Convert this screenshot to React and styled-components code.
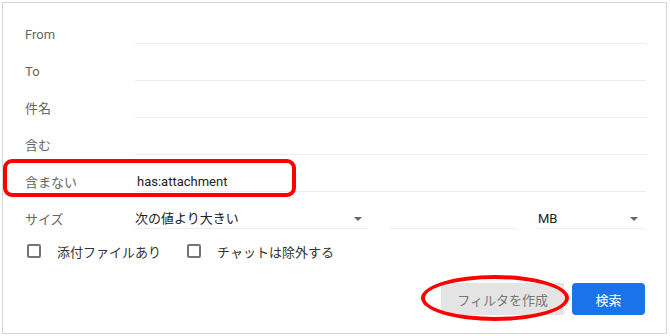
import React from "react";
import styled, { createGlobalStyle } from "styled-components";

const GlobalStyle = createGlobalStyle`
  html, body {
    margin: 0;
    padding: 0;
    background: #fff;
  }
  body {
    font-family: Roboto, "Noto Sans CJK JP", sans-serif;
    -webkit-font-smoothing: antialiased;
  }
`;

const fields = [
  { label: "From", value: "" },
  { label: "To", value: "" },
  { label: "件名", value: "" },
  { label: "含む", value: "" },
  { label: "含まない", value: "has:attachment", marked: true },
];

const App = () => {
  return (
    <>
      <GlobalStyle />
      <Panel>
        <Rows>
          {fields.map((f) => (
            <Row key={f.label}>
              {f.marked && <MarkBox />}
              <Label>{f.label}</Label>
              <Field>{f.value}</Field>
            </Row>
          ))}
          <Row>
            <Label>サイズ</Label>
            <SizeFields>
              <Select width={233}>
                <span>次の値より大きい</span>
                <Caret />
              </Select>
              <Field style={{ width: 126 }} />
              <Select width={106}>
                <span>MB</span>
                <Caret />
              </Select>
            </SizeFields>
          </Row>
        </Rows>

        <CheckRow>
          <Check>
            <Box />
            <span>添付ファイルあり</span>
          </Check>
          <Check>
            <Box />
            <span>チャットは除外する</span>
          </Check>
        </CheckRow>

        <ButtonRow>
          <ButtonWrap>
            <MarkEllipse />
            <Button>フィルタを作成</Button>
          </ButtonWrap>
          <Button primary>検索</Button>
        </ButtonRow>
      </Panel>
    </>
  );
};

export default App;

const Panel = styled.div`
  position: relative;
  box-sizing: border-box;
  margin: 2px 0 0 2px;
  width: 665px;
  height: 332px;
  border: 1px solid #d6d6d6;
  background: #fff;
  padding: 4px 20px 0 22px;
  font-size: 13px;
`;

const Rows = styled.div`
  display: flex;
  flex-direction: column;
`;

const Row = styled.div`
  position: relative;
  height: 37px;
  display: grid;
  grid-template-columns: 110px 1fr;
  align-items: end;
`;

const Label = styled.div`
  color: #666;
  line-height: 18px;
`;

const Field = styled.div`
  box-sizing: border-box;
  height: 19px;
  line-height: 18px;
  padding-left: 2px;
  color: #222;
  border-bottom: 1px solid #ececec;
`;

const SizeFields = styled.div`
  display: flex;
  align-items: end;
  gap: 22px;
`;

const Select = styled.div`
  box-sizing: border-box;
  width: ${(p) => p.width}px;
  height: 19px;
  line-height: 18px;
  display: flex;
  align-items: center;
  justify-content: space-between;
  padding-right: 6px;
  color: #222;
  border-bottom: 1px solid #ececec;
`;

const Caret = styled.span`
  width: 0;
  height: 0;
  border-left: 4px solid transparent;
  border-right: 4px solid transparent;
  border-top: 4px solid #666;
`;

const CheckRow = styled.div`
  height: 44px;
  display: flex;
  align-items: center;
  gap: 26px;
  padding-left: 2px;
`;

const Check = styled.label`
  display: flex;
  align-items: center;
  gap: 16px;
  color: #333;
`;

const Box = styled.span`
  box-sizing: border-box;
  width: 14px;
  height: 14px;
  border: 2px solid #757575;
  border-radius: 2px;
`;

const ButtonRow = styled.div`
  margin-top: 10px;
  display: flex;
  justify-content: flex-end;
  gap: 8px;
  padding-right: 1px;
`;

const ButtonWrap = styled.div`
  position: relative;
`;

const Button = styled.button`
  box-sizing: border-box;
  height: 32px;
  min-width: ${(p) => (p.primary ? 73 : 120)}px;
  border: none;
  border-radius: ${(p) => (p.primary ? "4px" : "0")};
  background: ${(p) => (p.primary ? "#1a73e8" : "#e4e4e4")};
  color: ${(p) => (p.primary ? "#fff" : "#777")};
  font-family: Roboto, "Noto Sans CJK JP", sans-serif;
  font-size: 13px;
  padding: 0 16px;
`;

const MarkBox = styled.div`
  position: absolute;
  left: -22px;
  top: 4px;
  width: 293px;
  height: 38px;
  box-sizing: border-box;
  border: 4px solid #f00;
  border-radius: 9px;
  pointer-events: none;
`;

const MarkEllipse = styled.div`
  position: absolute;
  left: -20px;
  top: -8px;
  width: 148px;
  height: 46px;
  box-sizing: border-box;
  border: 4px solid #f00;
  border-radius: 50%;
  pointer-events: none;
  z-index: 1;
`;
